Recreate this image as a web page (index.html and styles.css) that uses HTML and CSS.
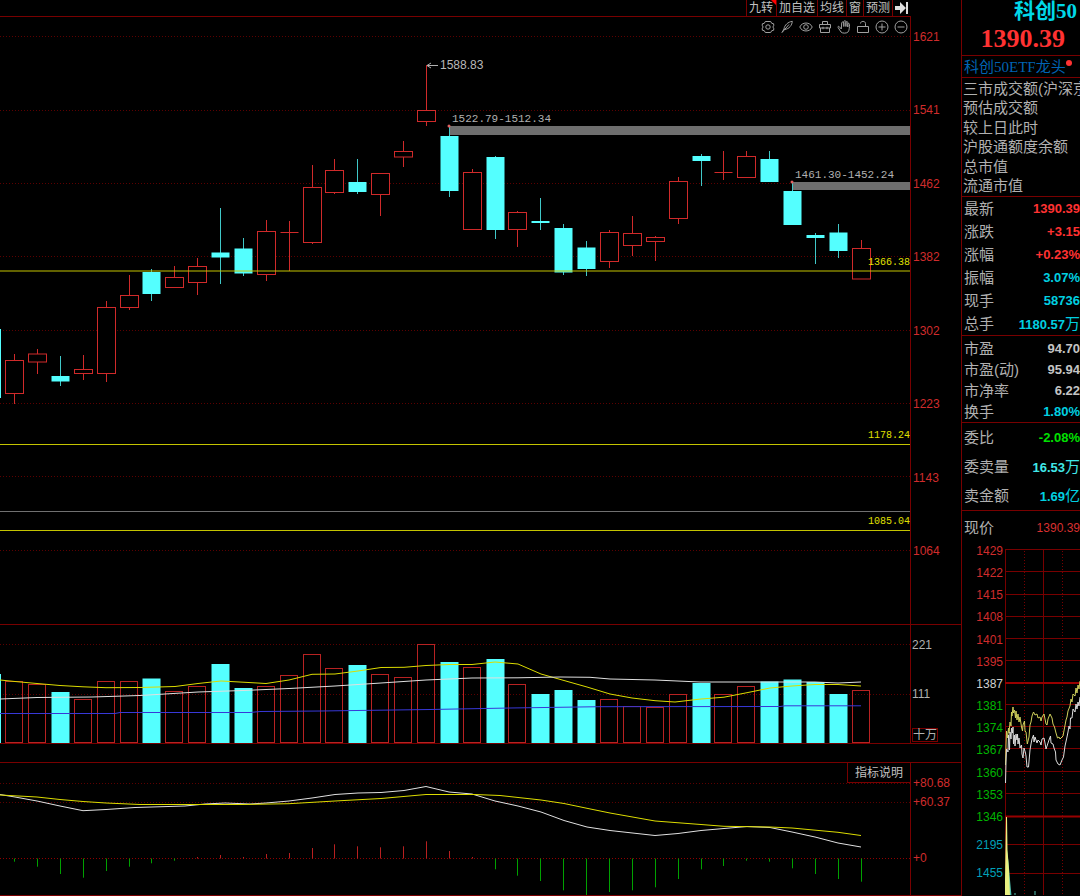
FILE: index.html
```html
<!DOCTYPE html>
<html lang="zh-CN">
<head>
<meta charset="utf-8">
<meta name="viewport" content="width=device-width, initial-scale=1">
<title>科创50</title>
<link rel="stylesheet" href="styles.css">
</head>
<body>
<div class="terminal">
  <main class="charts">
    <nav class="toolbar" aria-label="图表工具">
      <button class="tool tool-flag" type="button">九转</button>
      <button class="tool" type="button">加自选</button>
      <button class="tool" type="button">均线</button>
      <button class="tool" type="button">窗</button>
      <button class="tool" type="button">预测</button>
      <button class="tool tool-end" type="button" aria-label="收起">
        <svg viewBox="0 0 14 12" width="14" height="12"><path d="M0 4h5V0l6 6-6 6V8H0z" fill="#ddd"/><path d="M12 0v12" stroke="#ddd" stroke-width="2"/></svg>
      </button>
    </nav>

    <section class="panel">
      <div class="plot">
        <div class="icons">
          <button type="button" aria-label="设置"><svg viewBox="0 0 14 14"><path d="M4.3 1.5h5.4l1 1.8 2 .5v2L11.8 7l.9 1.2v2l-2 .5-1 1.8H4.3l-1-1.8-2-.5v-2L2.2 7l-.9-1.2v-2l2-.5z"/><circle cx="7" cy="7" r="2.2"/></svg></button>
          <button type="button" aria-label="画线"><svg viewBox="0 0 14 14"><path d="M2 12.5 4 9C4.500 5 8 2 12.300 1.300 12 5 9.500 9 4.500 9.500M2 12.500 9 4.500"/></svg></button>
          <button type="button" aria-label="显示"><svg viewBox="0 0 14 14"><path d="M.8 7C3 1.700 11 1.700 13.200 7 11 12.300 3 12.300.8 7z"/><circle cx="7" cy="7" r="2.300"/></svg></button>
          <button type="button" aria-label="工具箱"><svg viewBox="0 0 14 14"><path d="M1.500 4.500h11v3.500h-11zM2.500 8v4.500h9V8M4.500 4.500v-3h5v3M5 6.800v2.400M9 6.800v2.400"/></svg></button>
          <button type="button" aria-label="移动"><svg viewBox="0 0 14 14"><path d="M4.300 9 2.300 6.700C1.300 5.800.5 6.800 1.200 7.700L4 12c1.200 1.500 6 1.600 7.300-.3 1-1.600 1.200-5 1.200-7.300 0-1.300-1.600-1.300-1.700 0V7 2.600c0-1.400-1.800-1.400-1.900 0V6.500 1.700C8.900.3 6.900.3 6.800 1.700V6.500 3C6.800 1.500 4.800 1.500 4.700 3z"/></svg></button>
          <button type="button" aria-label="解锁"><svg viewBox="0 0 14 14"><path d="M1.500 6.500h11v6h-11zM4.500 3.500C4.500.7 9.500.7 9.500 3.500v3"/></svg></button>
          <button type="button" aria-label="放大"><svg viewBox="0 0 14 14"><circle cx="7" cy="7" r="6"/><path d="M3.500 7h7M7 3.500v7"/></svg></button>
          <button type="button" aria-label="缩小"><svg viewBox="0 0 14 14"><circle cx="7" cy="7" r="6"/><path d="M3.500 7h7"/></svg></button>
        </div>
        <svg class="canvas" id="price" viewBox="0 36 910 588" role="img" aria-label="日K线">
          <path class="grid-dots" d="M0 36.500H910M0 110.500H910M0 183.500H910M0 256.500H910M0 330.500H910M0 403.500H910M0 476.500H910M0 550.500H910"/>
          <path class="gap-band" d="M449.500 126H910v9H449.500zM792.500 182H910v8H792.500z"/>
          <g id="candles"></g>
          <path class="line-grey" d="M0 511.500H910"/>
          <path class="line-yellow" d="M0 271H910M0 444.500H910M0 530.500H910"/>
          <path class="arrow" d="M427 65.500H438M431 63l-4 2.500 4 2.500"/>
          <circle class="gap-dot" cx="449" cy="126" r="1.500"/>
          <circle class="gap-dot" cx="792" cy="182" r="1.500"/>
          <text class="t-peak" x="440" y="69">1588.83</text>
          <text class="t-gap" x="452" y="122">1522.79-1512.34</text>
          <text class="t-gap" x="795" y="178">1461.30-1452.24</text>
          <text class="t-level" x="910" y="265">1366.38</text>
          <text class="t-level" x="910" y="438">1178.24</text>
          <text class="t-level" x="910" y="524">1085.04</text>
        </svg>
      </div>
      <ol class="axis axis-price">
        <li>1621</li><li>1541</li><li>1462</li><li>1382</li><li>1302</li><li>1223</li><li>1143</li><li>1064</li>
      </ol>
    </section>

    <section class="panel">
      <div class="plot">
        <svg class="canvas" viewBox="0 625 910 118" role="img" aria-label="成交量">
          <path class="grid-dots" d="M0 644.500H910M0 694.500H910"/>
          <g id="volumes"></g>
          <polyline class="ma ma-yellow" points="0,680 15,681.500 37,683.500 60,685.500 83,686.800 106,687.700 140,687.500 175,686.500 198,683.500 221,681 243,682.200 266,683.500 289,680 312,674.300 335,674 358,671 381,667.500 404,667.300 426,665.500 449,664.500 472,664.500 495,662 518,664 541,674 564,680.500 587,687 610,694 632,698 655,700.700 675,702 701,699 724,697.200 747,692.700 770,688 792,686 815,684.500 838,684.500 861,686"/>
          <polyline class="ma ma-white" points="0,699 37,697.500 92,697 140,695.500 198,692 243,690.500 289,688.500 335,686 381,683 426,680 472,678 518,677.800 560,677 590,677.300 610,679 655,680 700,682 815,682 838,683 861,682"/>
          <polyline class="ma ma-blue" points="0,713.500 115,713.500 120,712.500 250,712.500 260,711.500 320,711 430,709.500 510,708 600,706.700 780,706.500 785,705.800 861,705.800"/>
        </svg>
      </div>
      <div class="axis axis-volume">
        <span>221</span><span>111</span><span class="unit">十万</span>
      </div>
    </section>

    <section class="panel panel-macd">
      <div class="plot">
        <div class="legend"><button class="legend-button" type="button">指标说明</button></div>
        <svg class="canvas" viewBox="0 783 910 112" role="img" aria-label="MACD">
          <path class="grid-dots" d="M0 783.500H910M0 802.500H910"/>
          <path class="grid-dots grid-zero" d="M0 858.500H910"/>
          <g id="bars"></g>
          <polyline class="ma ma-white" points="0,794.500 15,797 37,801 60,806 83,810.700 106,809.500 135,807.500 185,806 205,804 225,803 250,804 266,803 289,801 312,798 335,794.500 358,793 381,792.500 404,790.500 426,786.500 449,792 472,794 495,801 518,806 541,812 564,820.500 587,827 610,830.500 655,835.500 678,833.500 701,830.500 747,826.500 770,827.500 792,832 815,837 838,843 861,847"/>
          <polyline class="ma ma-yellow" points="0,795 37,797 60,799.500 83,801.500 106,803 140,804.500 243,804.500 289,803.700 335,801 381,798.500 426,794.500 475,794.500 500,795.500 541,800 564,803.500 587,808.300 610,813 655,821 701,824.500 724,826.300 770,827 792,828 838,832.300 861,835.500"/>
        </svg>
      </div>
      <div class="axis axis-macd">
        <span>+80.68</span><span>+60.37</span><span>+0</span>
      </div>
    </section>
  </main>

  <aside class="quote">
    <header class="head">
      <h1 class="name">科创50</h1>
      <p class="price">1390.39</p>
    </header>
    <p class="etf"><a href="#etf">科创50ETF龙头</a><i class="dot"></i></p>
    <ul class="group labels">
      <li>三市成交额(沪深京)</li><li>预估成交额</li><li>较上日此时</li><li>沪股通额度余额</li><li>总市值</li><li>流通市值</li>
    </ul>
    <dl class="group rows">
      <div><dt>最新</dt><dd class="up">1390.39</dd></div>
      <div><dt>涨跌</dt><dd class="up">+3.15</dd></div>
      <div><dt>涨幅</dt><dd class="up">+0.23%</dd></div>
      <div><dt>振幅</dt><dd class="cyan">3.07%</dd></div>
      <div><dt>现手</dt><dd class="cyan">58736</dd></div>
      <div><dt>总手</dt><dd class="cyan">1180.57<span class="cjk">万</span></dd></div>
    </dl>
    <dl class="group rows rows-tight">
      <div><dt>市盈</dt><dd>94.70</dd></div>
      <div><dt>市盈(动)</dt><dd>95.94</dd></div>
      <div><dt>市净率</dt><dd>6.22</dd></div>
      <div><dt>换手</dt><dd class="cyan">1.80%</dd></div>
    </dl>
    <dl class="group rows rows-loose">
      <div><dt>委比</dt><dd class="down">-2.08%</dd></div>
      <div><dt>委卖量</dt><dd class="aqua">16.53<span class="cjk">万</span></dd></div>
      <div><dt>卖金额</dt><dd class="cyan">1.69<span class="cjk">亿</span></dd></div>
    </dl>
    <dl class="rows rows-now">
      <div><dt>现价</dt><dd class="now">1390.39</dd></div>
    </dl>
    <div class="intraday">
      <div class="scale">
        <ol class="scale-price">
          <li>1429</li><li>1422</li><li>1415</li><li>1408</li><li>1401</li><li>1395</li><li class="base">1387</li><li class="low">1381</li><li class="low">1374</li><li class="low">1367</li><li class="low">1360</li><li class="low">1353</li><li class="low">1346</li>
        </ol>
        <ol class="scale-volume"><li>2195</li><li>1455</li></ol>
      </div>
      <svg class="minute" viewBox="1005 542 75 353" role="img" aria-label="分时走势">
        <path class="mesh" d="M1005 549.500H1080M1005 571.500H1080M1005 594.500H1080M1005 616.500H1080M1005 638.500H1080M1005 660.500H1080M1005 704.500H1080M1005 726.500H1080M1005 748.500H1080M1005 771.500H1080M1005 793.500H1080M1005 844.500H1080M1005 873.500H1080M1005.500 549V896M1043.500 549V896"/>
        <path class="mesh mesh-strong" d="M1005 683H1080M1005 816.500H1080"/>
        <path class="mesh mesh-dots" d="M1024.500 551V896M1062.500 551V896"/>
        <path class="vol-cyan" d="M1006 896 1007 850 1008.500 862 1010 880 1011.500 896zM1014.500 893h1v3h-1zM1034.500 891h1v5h-1z"/>
        <path class="vol-yellow" d="M1005 896V880L1006 817H1007L1007.500 850 1009 870 1010 896z"/>
        <polyline class="tick tick-yellow" points="1005.500,765 1006,745 1006.500,731 1007.500,738 1008.500,728 1009,733 1010,722 1011,726 1011.500,712 1012,716 1013,707 1013.500,713 1014.500,710 1015.500,718 1016,711 1017,720 1018,714 1019,722 1020,717 1021.500,727 1022.500,731 1023,725 1024.500,721 1025,731 1026,732 1027.300,744 1029,737 1030,725 1031,722 1032,716 1033.500,712 1035,715 1037,714 1038,718 1040,717 1041,721 1042,717 1044,714 1046,724 1047,725 1048,719 1050,714 1052,718 1053,724 1054.500,727 1056,733 1057.500,738 1059,737 1060,739 1063,736 1064.500,728 1066,720 1067,717 1068,711 1070,706 1071,699 1072,702 1073,694 1075,696 1076,688 1077,693 1078,685 1079,689 1080,681"/>
        <polyline class="tick tick-white" points="1005.500,783 1006,762 1006.500,749 1008,752 1008.500,735 1009.500,750 1010,732 1011,739 1011.500,728 1012.500,733 1013,727 1013.500,744 1014.500,735 1015,746 1016,734 1017,740 1017.500,734 1018,744 1019,738 1020,748 1021.500,745 1022,754 1023,758 1024,748 1025.500,753 1026,756 1027,767 1028.500,767 1030,750 1031,744 1032,739 1033.500,735 1034,742 1035,737 1037,743 1038,740 1040,742 1041,745 1042,739 1044,738 1045,743 1046,749 1047,746 1049,740 1050.500,736 1051,743 1053,744 1054,748 1055.500,752 1056,760 1058,764 1060,765 1062,760 1063.500,757 1065,746 1067,737 1068,732 1069,726 1070,729 1070.500,718 1072,718 1073,709 1075,712 1076,704 1077,709 1078,702 1079,706 1080,697"/>
      </svg>
    </div>
  </aside>
</div>
<script src="chart.js"></script>
</body>
</html>
```
FILE: styles.css
```css
* { box-sizing: border-box; margin: 0; padding: 0; }

:root {
  --line: #780000;
  --red: #d02c2c;
  --cyan: #54ffff;
  --grey: #b0b0b0;
}

body {
  background: #000;
  color: var(--grey);
  font-family: "Liberation Sans", "Noto Sans CJK SC", sans-serif;
  font-size: 12px;
}

ul, ol { list-style: none; }
button { background: none; border: 0; color: inherit; font: inherit; cursor: pointer; }
a { color: inherit; text-decoration: none; }

.terminal {
  display: grid;
  grid-template-columns: minmax(0, 1fr) 119px;
  min-height: 100vh;
  overflow: hidden;
}

/* Charts */
.toolbar {
  display: flex;
  justify-content: flex-end;
  height: 17px;
  margin-right: 50px;
  border-bottom: 1px solid var(--line);
}
.tool {
  position: relative;
  border-left: 1px solid var(--line);
  padding: 0 2px;
  line-height: 16px;
  color: #c0c0c0;
}
.tool-end { padding: 1px 2px; }
.tool-end svg { display: block; }
.tool-flag { padding-right: 3px; }
.tool-flag::after {
  content: "";
  position: absolute;
  top: 0;
  right: 0;
  border-top: 5px solid #f00;
  border-left: 5px solid transparent;
}

.panel {
  display: grid;
  grid-template-columns: minmax(0, 1fr) 50px;
  border-bottom: 1px solid var(--line);
}
.panel-macd { margin-top: 18px; border-top: 1px solid var(--line); }
.plot { border-right: 1px solid var(--line); }
.canvas { display: block; width: 100%; height: auto; }

.icons { display: flex; justify-content: flex-end; height: 19px; }
.icons button { width: 19px; padding: 3px; }
.icons svg {
  display: block;
  width: 14px;
  height: 14px;
  fill: none;
  stroke: #a0a0a0;
  stroke-width: 1;
}

.axis { color: var(--red); line-height: 16px; padding-left: 2px; }
.axis-price {
  display: flex;
  flex-direction: column;
  justify-content: space-between;
  padding-top: 12px;
  padding-bottom: 65px;
}
.axis-volume {
  display: grid;
  grid-template-rows: 49px 42px 14px;
  align-content: start;
  padding: 12px 0 0 1px;
  color: var(--grey);
}
.unit {
  justify-self: start;
  line-height: 13px;
  height: 14px;
  border: 1px solid var(--line);
}
.axis-macd {
  display: grid;
  grid-template-rows: 19px 56px 16px;
  align-content: start;
  padding-top: 12px;
}

.legend { display: flex; justify-content: flex-end; height: 20px; }
.legend-button {
  padding: 0 7px;
  border-left: 1px solid var(--line);
  border-bottom: 1px solid var(--line);
  line-height: 18px;
  color: #c0c0c0;
}

.grid-dots { stroke: #5c0000; stroke-dasharray: 1 2; fill: none; }
.grid-zero { stroke: #900000; }
.gap-band { fill: #6e6e6e; }
.gap-dot { fill: #e06060; }
.line-grey { stroke: #707070; }
.line-yellow { stroke: #c4c400; }
.arrow { stroke: #b0b0b0; fill: none; }
.rise { fill: #000; stroke: #d02a2a; }
.rise-bar { fill: none; stroke: #b82222; }
.rise-wick { stroke: #d02a2a; }
.fall { fill: var(--cyan); }
.fall-wick { stroke: #40c8c8; }
.minus { stroke: #00a000; }
.plus { stroke: #b82020; }
.ma { fill: none; stroke-width: 1; }
.ma-yellow { stroke: #dcdc00; }
.ma-white { stroke: #e0e0e0; }
.ma-blue { stroke: #3838d8; }
.t-peak { fill: #b8b8b8; font-size: 12px; }
.t-gap { fill: #b0b0b0; font: 11px "Liberation Mono", monospace; }
.t-level { fill: #e0e000; font: 10px "Liberation Mono", monospace; text-anchor: end; }

/* Quote panel */
.quote {
  display: flex;
  flex-direction: column;
  min-width: 0;
  border-left: 1px solid var(--line);
}
.head {
  height: 56px;
  border-bottom: 1px solid var(--line);
  font-family: "Liberation Serif", "Noto Sans CJK SC", serif;
  text-align: right;
}
.name { padding-right: 3px; font-size: 21px; line-height: 22px; color: #00d8e8; }
.price { padding-right: 15px; font-size: 26px; font-weight: 700; line-height: 34px; color: #ff3232; }
.etf {
  display: flex;
  height: 22px;
  padding-left: 2px;
  border-bottom: 1px solid var(--line);
  font: 15px/22px "Liberation Serif", "Noto Sans CJK SC", serif;
  color: #0064b4;
  white-space: nowrap;
}
.dot { width: 6px; height: 6px; margin-top: 4px; border-radius: 50%; background: #ff3232; }

.group { border-bottom: 1px solid var(--line); }
.labels {
  display: grid;
  align-content: space-between;
  height: 119px;
  padding: 1px 0 1px 1px;
  font-size: 15px;
  white-space: nowrap;
}
.labels li { height: 19px; line-height: 19px; }
.rows div { display: flex; justify-content: space-between; height: 23px; line-height: 23px; }
.rows dt { padding-left: 2px; font-size: 15px; white-space: nowrap; }
.rows dd { font-size: 13px; font-weight: 700; color: #c4c4c4; white-space: nowrap; }
.rows-tight { padding-top: 2px; }
.rows-tight div { height: 21px; line-height: 21px; }
.rows-loose div { height: 29px; line-height: 29px; }
.rows-now div { height: 31px; line-height: 34px; }
.rows .cjk { font-size: 15px; font-weight: 400; }
.rows .up { color: #ff3232; }
.rows .down { color: #00e000; }
.rows .cyan { color: #00d0e0; }
.rows .aqua { color: #40e8e8; }
.rows .now { font-weight: 400; font-size: 12px; color: #d83030; }

.intraday { display: grid; grid-template-columns: minmax(0, 1fr) 75px; }
.scale { padding: 1px 2px 0 0; text-align: right; line-height: 16px; color: var(--red); }
.scale-price {
  display: flex;
  flex-direction: column;
  justify-content: space-between;
  height: 282px;
}
.scale-volume { display: grid; align-content: start; row-gap: 12px; padding-top: 12px; color: #00a0b8; }
.scale .base { color: #d0d0d0; }
.scale .low { color: #00b400; }
.minute { display: block; width: 100%; height: auto; }
.mesh { stroke: #780000; fill: none; }
.mesh-strong { stroke: #980000; stroke-width: 2; }
.mesh-dots { stroke-dasharray: 1 2; }
.tick { fill: none; }
.tick-yellow { stroke: #d0d05c; }
.tick-white { stroke: #dcdcdc; }
.vol-cyan { fill: #50c0b0; }
.vol-yellow { fill: #e8f080; }
```
FILE: chart.js
```js
// One row per trading day: direction, high, body top, body bottom, low, volume top, MACD bar end.
const days = [
  ["r", 354, 360.5, 393.5, 404, 681.5, 861.7],
  ["r", 349, 354, 362, 374, 684.5, 866.7],
  ["c", 356, 376, 381.5, 386, 692, 874],
  ["r", 355, 369.5, 373.5, 380, 699.5, 877.7],
  ["r", 301, 307.5, 373.5, 382, 681.5, 871],
  ["r", 275, 295.5, 307.5, 310, 681.5, 866.7],
  ["c", 269, 272, 294, 301, 678.5, 863.3],
  ["r", 266, 277.5, 287.5, 288, 691.5, 860.7],
  ["r", 258, 266.5, 282.5, 295, 686.5, 857],
  ["c", 208, 252.5, 257.5, 284, 664, 855],
  ["c", 238, 248.5, 273.5, 276, 688, 857],
  ["r", 220, 231.5, 274.5, 281, 686.5, 854],
  ["r", 221, 232.5, 232.5, 271, 675.5, 853],
  ["r", 165, 187.5, 242.5, 244, 654.5, 848],
  ["r", 159, 170.5, 192.5, 194, 668.5, 844.3],
  ["c", 159, 182, 192, 194, 665, 846.3],
  ["r", 173, 173.5, 194.5, 216, 674.5, 847.3],
  ["r", 141, 151.5, 157, 167, 677.5, 846.3],
  ["r", 65, 110.5, 121.5, 126, 644.5, 841.3],
  ["c", 126, 136, 191, 197, 662, 851],
  ["r", 169, 172.5, 229.5, 230, 667.5, 857],
  ["c", 156, 157, 230, 239, 659, 869.3],
  ["r", 211, 212.5, 229.5, 247, 684.5, 875.7],
  ["c", 198, 221, 223, 230, 694, 881],
  ["c", 224, 228, 272.5, 275, 690, 890.3],
  ["c", 241, 247.5, 269, 276, 700, 895],
  ["r", 230, 232.5, 261.5, 268, 699.5, 892],
  ["r", 216, 233.5, 245.5, 256, 706.5, 890.3],
  ["r", 236, 237.5, 241.5, 261, 707.5, 887.3],
  ["r", 177, 181.5, 218.5, 224, 694.5, 879],
  ["c", 154, 156, 161, 186, 683, 869.3],
  ["r", 151, 172.5, 172.5, 180, 694.5, 866],
  ["r", 151, 156.5, 177.5, 178, 686.5, 860.7],
  ["c", 151, 159, 182, 182, 681.5, 861.7],
  ["c", 182, 191, 225, 225, 679.5, 868.3],
  ["c", 233, 235, 238, 264, 682, 874],
  ["c", 224, 232.5, 251, 258, 694, 879],
  ["r", 240, 248.5, 279, 279, 690.5, 881.7]
];

const FIRST_X = 14.6;
const STEP = 22.88;
const VOLUME_BASE = 743;
const MACD_ZERO = 858.5;

const rect = (cls, x, y, w, h) =>
  `<rect class="${cls}" x="${x}" y="${y}" width="${w}" height="${h}"/>`;
const vline = (cls, x, y1, y2) =>
  `<path class="${cls}" d="M${x} ${y1}V${y2}"/>`;

let candles = rect("fall", 0, 329, 1, 69);
let volumes = rect("fall", 0, 674, 1, 69);
let bars = "";

days.forEach(([dir, high, top, bottom, low, volume, macd], i) => {
  const x = Math.floor(FIRST_X + STEP * i) + 0.5;
  if (dir === "r") {
    candles += vline("rise-wick", x, high, low);
    candles += rect("rise", x - 9, top, 18, bottom - top);
    if (top === bottom) {
      candles += `<path class="rise-wick" d="M${x - 9} ${top}H${x + 9}"/>`;
    }
    volumes += rect("rise-bar", x - 9, volume, 17, VOLUME_BASE - 0.5 - volume);
  } else {
    candles += vline("fall-wick", x, high, low);
    candles += rect("fall", x - 9, top, 18, bottom - top);
    volumes += rect("fall", x - 9, volume, 18, VOLUME_BASE - volume);
  }
  bars += vline(macd > MACD_ZERO ? "minus" : "plus", x, MACD_ZERO, macd);
});

document.getElementById("candles").innerHTML = candles;
document.getElementById("volumes").innerHTML = volumes;
document.getElementById("bars").innerHTML = bars;
```
